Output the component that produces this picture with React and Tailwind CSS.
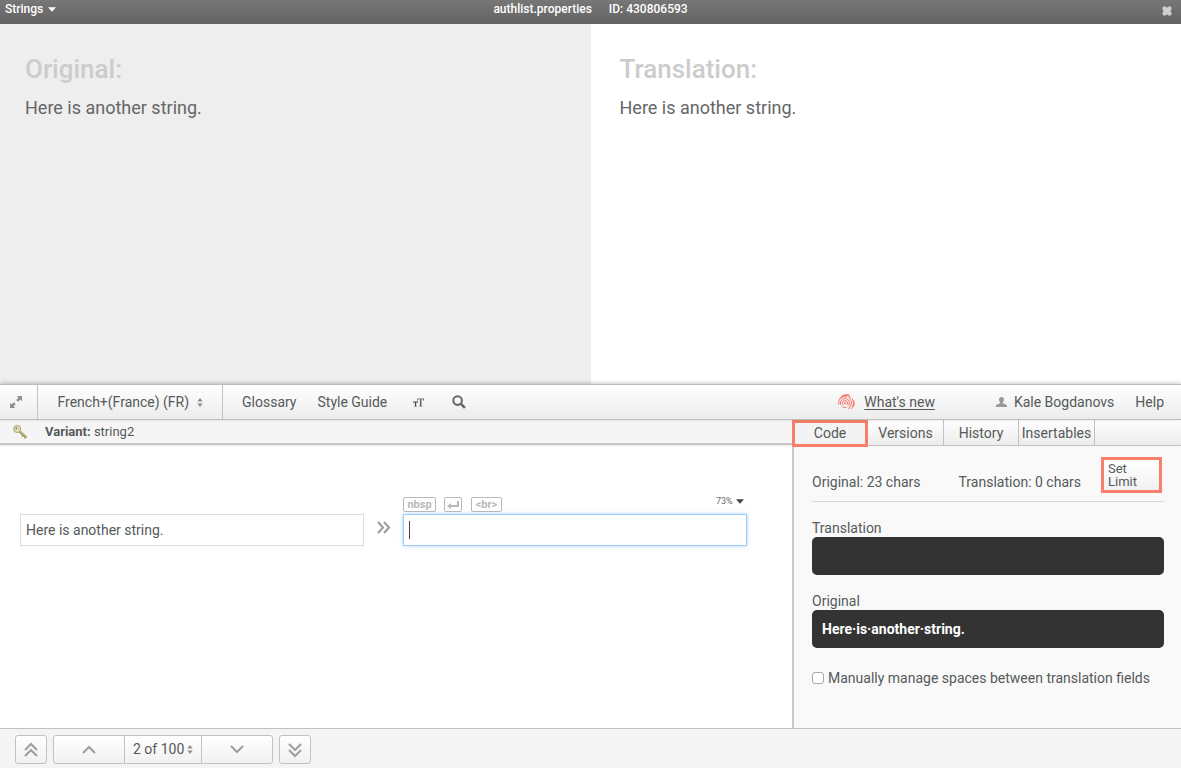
import React from "react";

const barFill = "bg-linear-to-b from-white to-[#ececec]";
const navButton =
  "flex h-[29px] items-center justify-center border border-[#c2c2c2] bg-linear-to-b from-white to-[#f1f1f1] text-[#9a9a9a]";
const keyButton =
  "flex h-[15px] items-center justify-center rounded-[2px] border border-[#b9b9b9] bg-white text-[11px] leading-[13px] font-bold text-[#b9b9b9]";

function UpDown() {
  return (
    <svg aria-hidden="true" width="6" height="9" viewBox="0 0 6 9" className="pointer-events-none shrink-0" fill="#8c8c8c">
      <path d="M3 0 5.6 3.6H.4ZM3 9 .4 5.4h5.2Z" />
    </svg>
  );
}

function Caret({ fill }) {
  return (
    <svg aria-hidden="true" width="8" height="5" viewBox="0 0 8 5" className="pointer-events-none shrink-0" fill={fill}>
      <path d="M0 .3h8L4 4.8Z" />
    </svg>
  );
}

function Chevrons({ paths, width = 14, height = 16 }) {
  return (
    <svg aria-hidden="true" width={width} height={height} viewBox={`0 0 ${width} ${height}`} fill="none" stroke="#a0a0a0" strokeWidth="2.2">
      {paths.map((d) => (
        <path key={d} d={d} />
      ))}
    </svg>
  );
}

function Header() {
  return (
    <header className="grid h-6 grid-cols-[1fr_auto_1fr] items-start bg-linear-to-b from-[#777] to-[#636363] text-[12px] leading-[18px] font-medium text-white">
      <button type="button" className="flex items-center gap-[5px] justify-self-start pl-[5px]">
        Strings <Caret fill="#fff" />
      </button>
      <div className="flex gap-[17px]">
        <span>authlist.properties</span>
        <span>ID: 430806593</span>
      </div>
      <button type="button" aria-label="Close" className="mt-[6px] mr-[9px] justify-self-end">
        <svg width="10" height="10" viewBox="0 0 10 10" fill="#cfcfcf">
          <path d="M1.5.5h2L5 1.700 6.500.5h2l1 1v2L8.300 5l1.200 1.500v2l-1 1h-2L5 8.300 3.500 9.500h-2l-1-1v-2L1.700 5 .5 3.500v-2Z" />
        </svg>
      </button>
    </header>
  );
}

function Preview() {
  return (
    <section className="grid min-h-[360px] flex-1 grid-cols-2">
      <div className="bg-[#eee] px-[25px] pt-[28px]">
        <h2 className="text-[26px] leading-[34px] font-medium text-[#ccc]">Original:</h2>
        <p className="mt-[10px] text-[18px] leading-[24px] text-[#666]">Here is another string.</p>
      </div>
      <div className="bg-white px-[29px] pt-[28px]">
        <h2 className="text-[26px] leading-[34px] font-medium text-[#ccc]">Translation:</h2>
        <p className="mt-[10px] text-[18px] leading-[24px] text-[#666]">Here is another string.</p>
      </div>
    </section>
  );
}

function Fingerprint() {
  return (
    <svg aria-hidden="true" width="17" height="17" viewBox="0 0 17 17" fill="none" stroke="#f2685c" strokeWidth="0.9">
      <circle cx="7" cy="9" r="0.8" />
      <path d="M5.600 11.300A2.700 2.700 0 1 1 8.700 11.100" />
      <path d="M3 11.200A4.600 4.600 0 1 1 10.500 12" />
      <path d="M4.500 12.800a4.600 4.600 0 0 0 4 .6" />
      <path d="M.8 10.800A6.500 6.500 0 0 1 9 2.800" />
      <path d="M10.400 3.400A6.500 6.500 0 0 1 10.200 14.700" />
      <path d="M1.200 5A8.400 8.400 0 0 1 13 3.200" />
      <path d="M14 4.400A8.400 8.400 0 0 1 12.800 15.200" />
      <path d="M3.500 2.200A9 9 0 0 1 11.500.9" />
      <path d="M15.800 6.500a10 10 0 0 1-.2 6.500" />
    </svg>
  );
}

function Toolbar() {
  return (
    <nav className={`z-10 flex h-9 items-stretch border-y border-[#bdbdbd] text-[14px] text-[#555a5a] shadow-[0_-1px_4px_rgba(0,0,0,0.22)] ${barFill}`}>
      <button type="button" aria-label="Expand" className="flex w-[38px] items-center border-r border-[#c2c2c2] pl-[10px]">
        <svg width="12" height="12" viewBox="0 0 12 12" fill="#8f8f8f">
          <path d="M6.800 0H12v5.200L10.300 3.500 8 5.800 6.200 4 8.500 1.700ZM0 6.800 1.700 8.500 4 6.200 5.800 8 3.500 10.300 5.200 12H0Z" />
        </svg>
      </button>
      <div className="flex w-[185px] items-center justify-center border-r border-[#c2c2c2]">
        <select aria-label="Language" className="w-[139px] appearance-none bg-transparent outline-none">
          <option>French+(France) (FR)</option>
        </select>
        <UpDown />
      </div>
      <div className="flex items-center pl-[19px]">
        <a href="#glossary">Glossary</a>
        <a href="#style-guide" className="ml-[21px]">Style Guide</a>
        <button type="button" aria-label="Text size" className="ml-[26px]">
          <svg width="11" height="9" viewBox="0 0 11 9" fill="#666">
            <path d="M4.300.5H11v2.300h-.6L10 1.300H8.500v6.400l1 .3v.5H5.900V8l1-.3V1.300H5.300l-.4 1.500h-.6Z" />
            <path fill="#444" d="M0 3.500h5V5h-.5l-.3-.8h-1v3.700l.7.200v.4H1.200v-.4l.7-.2V4.200H.8L.5 5H0Z" />
          </svg>
        </button>
        <button type="button" aria-label="Search" className="ml-[28px]">
          <svg width="14" height="14" viewBox="0 0 14 14" fill="none" stroke="#666" strokeWidth="2">
            <circle cx="5.600" cy="5.600" r="4.300" />
            <path strokeWidth="2.600" d="m8.900 8.900 4 4" />
          </svg>
        </button>
      </div>
      <div className="ml-auto flex items-center pr-[17px]">
        <Fingerprint />
        <a href="#whats-new" className="ml-[9px] underline underline-offset-2">What's new</a>
        <svg aria-hidden="true" className="ml-[61px]" width="11" height="10" viewBox="0 0 11 10" fill="#999">
          <path d="M5.500 0c1.600 0 2.500 1.100 2.500 2.600 0 1.200-.5 2.200-1.200 2.800v.9L10 7.400c.7.300 1 .8 1 1.600v1H0V9c0-.8.3-1.300 1-1.600l3.200-1.100v-.9C3.500 4.800 3 3.800 3 2.600 3 1.100 3.900 0 5.500 0Z" />
        </svg>
        <a href="#account" className="ml-[7px]">Kale Bogdanovs</a>
        <a href="#help" className="ml-[21px]">Help</a>
      </div>
    </nav>
  );
}

function Editor() {
  return (
    <section className="flex min-w-0 flex-1 flex-col bg-white">
      <div className="flex h-[25px] items-center border-b-2 border-[#c8c8c8] bg-[#f5f5f5] pl-[13px] text-[13px] text-[#555a5a] shadow-[0_1px_1px_rgba(0,0,0,0.08)]">
        <svg aria-hidden="true" width="15" height="14" viewBox="0 0 15 14">
          <path d="m6 6 7.500 6.500" stroke="#99925c" strokeWidth="2.400" />
          <path d="m6 5.500 7.500 6.500" stroke="#d9d3a0" strokeWidth="1" />
          <path d="m10 10-1.200 1.500m3.700.6L11.500 13.300" stroke="#99925c" strokeWidth="1.300" />
          <circle cx="4.200" cy="4" r="3.500" fill="#e3dfb0" stroke="#aaa377" />
          <circle cx="3.400" cy="3.200" r="1" fill="#8d8756" />
        </svg>
        <p className="ml-[17px]"><b>Variant:</b> string2</p>
      </div>
      <div className="flex items-end pt-[50px] pr-[45px] pl-5">
        <div className="flex min-w-0 flex-1">
          <input
            aria-label="Original string"
            readOnly
            defaultValue="Here is another string."
            className="h-8 w-full border border-[#ddd] px-[5px] text-[14px] text-[#555a5a] outline-none"
          />
        </div>
        <div className="flex h-8 w-[39px] justify-center pt-[7px]">
          <Chevrons width={14} height={13} paths={["m1 1 5 5.500-5 5.500", "m7 1 5 5.500-5 5.500"]} />
        </div>
        <div className="flex min-w-0 flex-1 flex-col">
          <div className="flex h-[19px] items-start">
            <button type="button" className={`mt-[2px] w-[33px] ${keyButton}`}>nbsp</button>
            <button type="button" aria-label="Line break" className={`mt-[2px] ml-2 w-[18px] ${keyButton}`}>
              <svg width="12" height="8" viewBox="0 0 12 8" fill="#b9b9b9">
                <path d="M0 5 4 2v2h6V0h2v6H4v2Z" />
              </svg>
            </button>
            <button type="button" className={`mt-[2px] ml-[9px] w-[31px] ${keyButton}`}>&lt;br&gt;</button>
            <div className="mr-[3px] ml-auto flex h-3 items-center">
              <select aria-label="Match" className="w-[20px] appearance-none bg-transparent text-[9px] leading-3 text-[#666] outline-none">
                <option>73%</option>
              </select>
              <Caret fill="#444" />
            </div>
          </div>
          <div className="relative flex">
            <input aria-label="Translated string" className="h-8 w-full border border-[#9ccbf8] bg-white px-[5px] text-[14px] shadow-[0_0_4px_rgba(120,185,245,0.6)] outline-none" />
            <span aria-hidden="true" className="absolute top-[7px] left-[6px] h-[18px] w-px bg-[#444]" />
          </div>
        </div>
      </div>
    </section>
  );
}

function Sidebar() {
  return (
    <aside className="flex w-[389px] shrink-0 flex-col border-l-2 border-[#c8c8c8] bg-[#f9f9f9] text-[14px] text-[#555a5a]">
      <div role="tablist" className={`-ml-[2px] flex h-[26px] border-b border-[#c2c2c2] ${barFill}`}>
        <button type="button" role="tab" aria-selected="true" className="-mb-px h-[27px] w-[76px] border-3 border-[#f87f6b] bg-[#f3f3f3]">Code</button>
        <button type="button" role="tab" aria-selected="false" className="w-[76px] border-r border-[#c2c2c2] pt-px">Versions</button>
        <button type="button" role="tab" aria-selected="false" className="w-[75px] border-r border-[#c2c2c2] pt-px">History</button>
        <button type="button" role="tab" aria-selected="false" className="w-[76px] border-r border-[#c2c2c2] pt-px">Insertables</button>
      </div>
      <div className="flex flex-col pt-[11px] pr-[17px] pl-[18px]">
        <div className="flex h-[45px] items-start justify-between border-b border-[#d8d8d8]">
          <span className="mt-[16px] leading-[18px]">Original: 23 chars</span>
          <span className="mt-[16px] ml-[18px] leading-[18px]">Translation: 0 chars</span>
          <button type="button" className="mr-[2px] flex h-[36px] w-[61px] flex-col justify-center border-3 border-[#f87f6b] bg-linear-to-b from-white to-[#f1f1f1] pl-[4px] text-left text-[13px] leading-[13px]">
            <span>Set</span>
            <span>Limit</span>
          </button>
        </div>
        <label htmlFor="code-translation" className="mt-[17px] leading-[18px]">Translation</label>
        <input id="code-translation" readOnly className="h-[38px] rounded-[5px] bg-[#333] px-[10px] font-bold text-white outline-none" />
        <label htmlFor="code-original" className="mt-[17px] leading-[18px]">Original</label>
        <input id="code-original" readOnly defaultValue="Here·is·another·string." className="h-[38px] rounded-[5px] bg-[#333] px-[10px] font-bold text-white outline-none" />
        <label className="mt-[21px] flex items-center gap-[4px] leading-[18px] whitespace-nowrap">
          <input type="checkbox" className="h-3 w-3 shrink-0 appearance-none rounded-[3px] border border-[#aaa] bg-white checked:bg-[#777]" />
          Manually manage spaces between translation fields
        </label>
      </div>
    </aside>
  );
}

function Footer() {
  return (
    <footer className="flex h-10 items-start border-t border-[#c2c2c2] bg-[#f4f4f4] pt-[6px] pl-[15px] text-[14px] text-[#555a5a]">
      <button type="button" aria-label="First" className={`w-8 rounded-[3px] ${navButton}`}>
        <Chevrons paths={["m1 8 6-6 6 6", "m1 14 6-6 6 6"]} />
      </button>
      <div className="ml-[6px] flex">
        <button type="button" aria-label="Previous" className={`w-[72px] rounded-l-[3px] ${navButton}`}>
          <Chevrons height={9} paths={["m1 8 6-6 6 6"]} />
        </button>
        <div className={`-ml-px w-[78px] ${navButton}`}>
          <select aria-label="Position" className="w-[54px] appearance-none bg-transparent text-[#555a5a] outline-none">
            <option>2 of 100</option>
          </select>
          <UpDown />
        </div>
        <button type="button" aria-label="Next" className={`-ml-px w-[72px] rounded-r-[3px] ${navButton}`}>
          <Chevrons height={9} paths={["m1 1 6 6 6-6"]} />
        </button>
      </div>
      <button type="button" aria-label="Last" className={`ml-[6px] w-8 rounded-[3px] ${navButton}`}>
        <Chevrons paths={["m1 2 6 6 6-6", "m1 8 6 6 6-6"]} />
      </button>
    </footer>
  );
}

export default function App() {
  return (
    <div className="flex min-h-screen flex-col bg-white font-[Roboto,'Liberation_Sans',sans-serif]">
      <Header />
      <Preview />
      <Toolbar />
      <main className="flex min-h-[308px]">
        <Editor />
        <Sidebar />
      </main>
      <Footer />
    </div>
  );
}
